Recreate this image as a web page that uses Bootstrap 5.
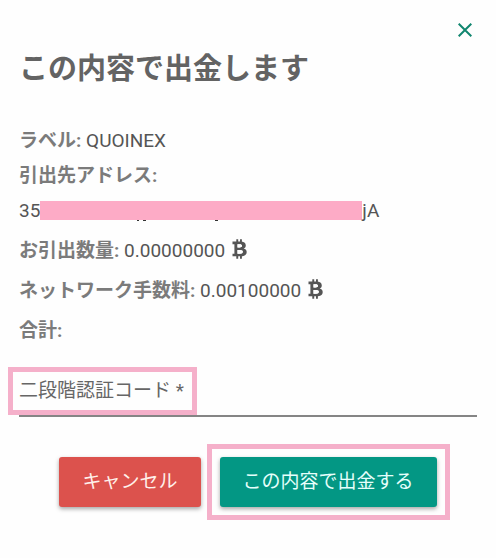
<!DOCTYPE html>
<html lang="ja">
<head>
<meta charset="utf-8">
<meta name="viewport" content="width=device-width, initial-scale=1">
<title>出金の確認</title>
<link href="https://cdn.jsdelivr.net/npm/bootstrap@5.3.0/dist/css/bootstrap.min.css" rel="stylesheet">
<style>
body { background: #fefefe; color: #555; font: 400 19px/35px Roboto, "Noto Sans CJK JP", sans-serif; }
.dialog { padding: 18px 19px 36px; }
.close-btn { width: 24px; height: 24px; color: #11866f; }
.heading { font-size: 29px; line-height: 44px; font-weight: 700; color: #636363; margin: 5px 0 32px; }
.detail { margin-bottom: 5px; }
.detail dt, .detail dd { display: inline; margin: 0; }
.detail dt { font-weight: 700; color: #7b7b7b; }
.detail .address { display: flex; align-items: center; }
.redacted { flex: 0 1 322px; height: 19px; background: #fdabc6; }
.redacted svg { display: block; margin-top: 18px; overflow: visible; }
.coin { width: 15px; height: 20px; margin-left: 2px; vertical-align: -2px; }
.code-field { margin-top: 23px; }
.code-field label { margin-top: 7px; color: #666; line-height: 26px; outline: 5px solid #f5b0ca; outline-offset: 6px; padding-right: 2px; }
.code-field .form-control { height: 46px; padding: 0; border: 0; border-bottom: 2px solid #858585; border-radius: 0; background: transparent; box-shadow: none; }
.actions { gap: 6px; margin-top: 27px; padding-left: 13px; }
.confirm-frame { border: 5px solid #f5b0ca; padding: 8px; }
.action { height: 50px; padding: 0 23px; border: 0; border-radius: 3px; font-size: 19px; line-height: 48px; box-shadow: 0 2px 4px rgba(0,0,0,.35); }
.action-cancel, .action-cancel:hover { background: #dc524d; color: #fff0ea; }
.action-confirm, .action-confirm:hover { background: #039784; color: #e6fffb; }
</style>
<script src="https://cdn.jsdelivr.net/npm/bootstrap@5.3.0/dist/js/bootstrap.bundle.min.js"></script>
</head>
<body>
<svg class="d-none" aria-hidden="true">
  <symbol id="coin" viewBox="0 0 15 20">
    <path d="M.5 2.600h7.700c3.800 0 5.600 1.400 5.600 3.800 0 1.500-.8 2.500-2.100 3.100 1.900.5 3 1.700 3 3.500 0 2.900-2.300 4.300-6.200 4.300H.5v-2.600h1.900V5.200H.5zM5.500 5.200v3.300h2c1.600 0 2.500-.6 2.500-1.700S9.100 5.200 7.500 5.200zM5.500 10.900v3.800h2.500c1.900 0 2.800-.7 2.800-1.900s-.9-1.900-2.800-1.900zM4.300.2h1.900V4H4.300zM8 .2h1.900V4H8zM4.300 16h1.900v3.800H4.300zM8 16h1.900v3.800H8z" fill="currentColor" fill-rule="nonzero" stroke="none"/>
    <path d="M5.500 5.200h2c1.600 0 2.500.5 2.500 1.600S9.100 8.500 7.500 8.500h-2zM5.500 10.900H8c1.900 0 2.800.7 2.800 1.900S9.900 14.700 8 14.700H5.500z" fill="#fefefe"/>
  </symbol>
</svg>
<main class="dialog">
  <div class="d-flex justify-content-end">
    <button type="button" class="close-btn btn p-0 border-0 d-flex align-items-center justify-content-center me-n1" aria-label="閉じる">
      <svg width="14" height="14" viewBox="0 0 14 14" fill="none" stroke="currentColor" stroke-width="2"><path d="M.7.7l12.600 12.600M13.300.7L.7 13.300"/></svg>
    </button>
  </div>
  <h1 class="heading">この内容で出金します</h1>
  <dl class="mb-0">
    <div class="detail mb-0"><dt>ラベル:</dt> <dd>QUOINEX</dd></div>
    <div class="detail"><dt>引出先アドレス:</dt>
      <dd class="address">35<span class="redacted"><svg width="200" height="2" aria-hidden="true"><path d="M97 1.500h2M103 1.500h3M175 1.500h3" stroke="#333" stroke-width="1"/></svg></span>jA</dd></div>
    <div class="detail"><dt>お引出数量:</dt> <dd>0.00000000 <svg class="coin" role="img" aria-label="BTC"><use href="#coin"/></svg></dd></div>
    <div class="detail"><dt>ネットワーク手数料:</dt> <dd>0.00100000 <svg class="coin" role="img" aria-label="BTC"><use href="#coin"/></svg></dd></div>
    <div class="detail mb-0"><dt>合計:</dt> <dd></dd></div>
  </dl>
  <form>
    <div class="code-field position-relative">
      <label for="code" class="position-absolute top-0 start-0">二段階認証コード *</label>
      <input id="code" type="text" class="form-control" inputmode="numeric" required>
    </div>
    <div class="actions d-flex justify-content-center align-items-center">
      <button type="button" class="btn action action-cancel">キャンセル</button>
      <div class="confirm-frame d-flex">
        <button type="submit" class="btn action action-confirm">この内容で出金する</button>
      </div>
    </div>
  </form>
</main>
</body>
</html>
